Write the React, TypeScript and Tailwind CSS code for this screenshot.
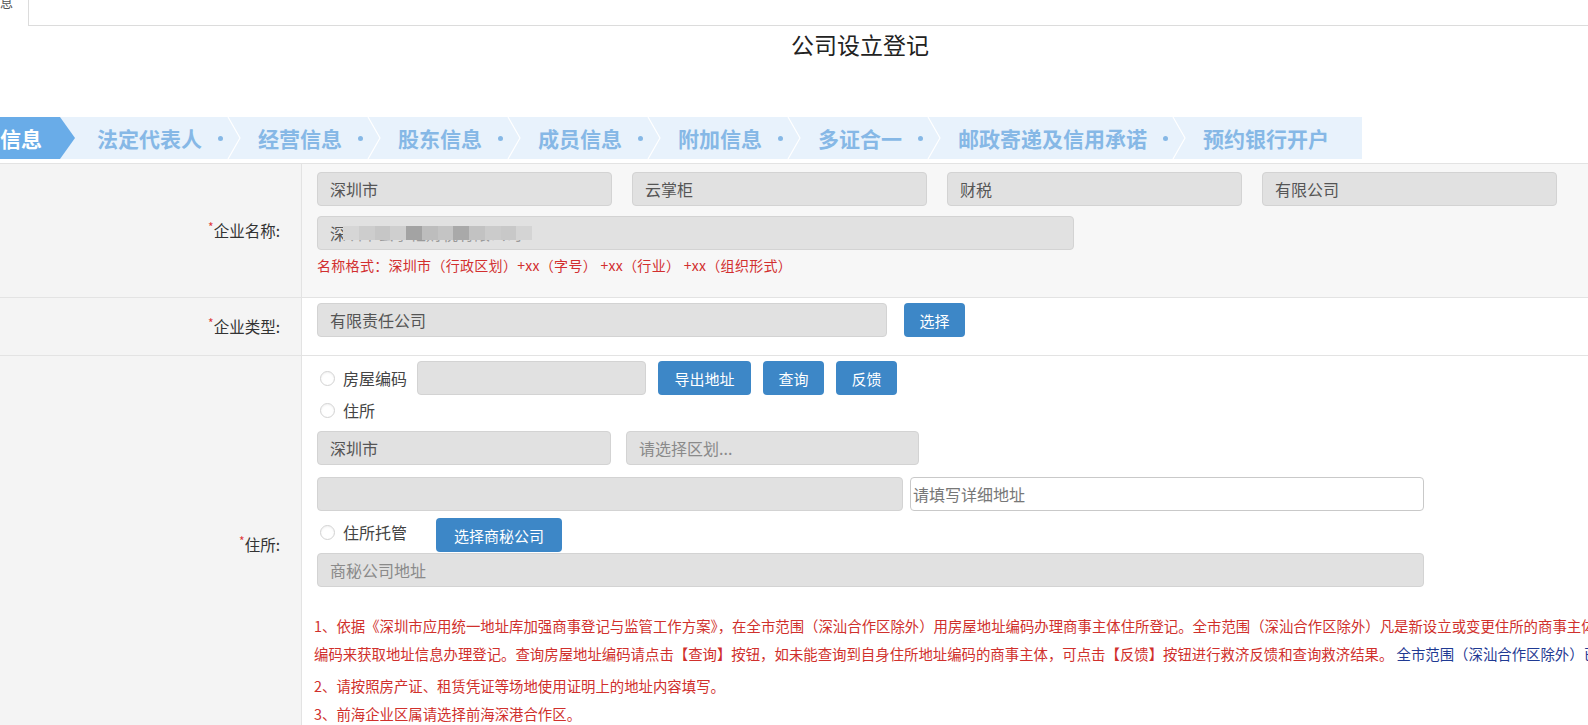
import React from 'react';

const steps = ['法定代表人', '经营信息', '股东信息', '成员信息', '附加信息', '多证合一', '邮政寄递及信用承诺'];

const mosaic = ['#d6d6d6', '#cdcdcd', '#c6c6c6', '#cfcfcf', '#a3a3a3', '#bdbdbd', '#c4c4c4', '#a9a9a9', '#c2c2c2', '#cbcbcb', '#c8c8c8', '#d4d4d4'];

function Field({
  text,
  w,
  muted = false,
  white = false,
  children,
}: {
  text?: string;
  w: string;
  muted?: boolean;
  white?: boolean;
  children?: React.ReactNode;
}) {
  return (
    <div
      className={`${w} h-[34px] shrink-0 rounded-[4px] border flex items-center text-[16px] leading-none whitespace-nowrap overflow-hidden ${
        white ? 'bg-white border-[#c9c9c9] pl-[2px] text-[#777]' : 'bg-[#e1e1e1] border-[#d3d3d3] pl-[12px]'
      } ${muted ? 'text-[#8a8a8a]' : white ? '' : 'text-[#555]'}`}
    >
      {children ?? text}
    </div>
  );
}

function Btn({ label, w }: { label: string; w: string }) {
  return (
    <button
      className={`${w} h-[34px] shrink-0 rounded-[4px] bg-[#3d87c7] text-white text-[15px] leading-none flex items-center justify-center`}
    >
      {label}
    </button>
  );
}

function Radio({ label }: { label: string }) {
  return (
    <div className="flex items-center shrink-0">
      <span className="w-[15px] h-[15px] rounded-full border border-[#d2d2d2] bg-white shadow-[inset_0_1px_2px_rgba(0,0,0,0.06)] ml-[3px]" />
      <span className="ml-[8px] text-[16px] text-[#444]">{label}</span>
    </div>
  );
}

function Label({ text }: { text: string }) {
  return (
    <div className="w-[302px] shrink-0 bg-[#f4f4f4] border-r border-[#e3e3e3] flex items-center justify-end pr-[21px] text-[15.5px] text-[#333]">
      <span className="whitespace-nowrap">
        <span className="text-[#e03b3b] text-[12px] align-top relative -top-[1px]">*</span>
        {text}
      </span>
    </div>
  );
}

export default function App() {
  return (
    <div className="w-[1588px] h-[725px] overflow-hidden bg-white font-['Noto_Sans_CJK_SC','Microsoft_YaHei',sans-serif] text-[#333]">
      {/* top strip */}
      <div className="flex h-[26px]">
        <div className="w-[28px] overflow-hidden">
          <span className="block text-[13px] leading-none text-[#555] mt-[-5px]">息</span>
        </div>
        <div className="flex-1 border-l border-b border-[#dcdcdc] bg-white" />
      </div>

      {/* title */}
      <div className="mt-[3px] h-[30px] flex items-center justify-center">
        <span className="text-[23px] leading-none text-[#222] ml-[132px]">公司设立登记</span>
      </div>

      {/* step bar */}
      <div className="mt-[58px] h-[42px] w-[1362px] flex items-center bg-[#e8f2fc] font-bold text-[21px] leading-none text-[#86b8e6]">
        <div className="h-full w-[60px] bg-[#69ace8] flex items-center text-white">信息</div>
        <svg width="15" height="42" viewBox="0 0 15 42" className="shrink-0">
          <polygon points="0,0 15,21 0,42" fill="#69ace8" />
        </svg>
        <div className="flex items-center ml-[22px]">
          {steps.map((s) => (
            <div key={s} className="flex items-center h-[42px]">
              <span>{s}</span>
              <span className="ml-[16px] w-[5px] h-[5px] rounded-full bg-[#86b8e6]" />
              <svg width="20" height="42" viewBox="0 0 20 42" className="ml-[2px] shrink-0">
                <polyline points="3,0 15,21 3,42" fill="none" stroke="#ffffff" strokeWidth="1.2" />
              </svg>
              <span className="w-[13px]" />
            </div>
          ))}
          <span>预约银行开户</span>
        </div>
      </div>

      {/* form table */}
      <div className="mt-[4px] border-t border-[#e3e3e3]">
        {/* 企业名称 */}
        <div className="flex h-[134px] border-b border-[#e3e3e3]">
          <Label text="企业名称:" />
          <div className="flex-1 bg-[#f7f7f7] pl-[15px] pt-[8px]">
            <div className="flex gap-[20px]">
              <Field w="w-[295px]" text="深圳市" />
              <Field w="w-[295px]" text="云掌柜" />
              <Field w="w-[295px]" text="财税" />
              <Field w="w-[295px]" text="有限公司" />
            </div>
            <div className="mt-[10px]">
              <Field w="w-[757px]">
                <span>深</span>
                <span className="relative text-[#9a9a9a]">
                  圳市云掌柜财税有限公司
                  <span className="absolute left-[-3px] right-[-10px] top-[1px] h-[14px] flex">
                    {mosaic.map((c, i) => (
                      <span key={i} className="flex-1 h-full" style={{ background: c }} />
                    ))}
                  </span>
                </span>
              </Field>
            </div>
            <div className="mt-[5px] h-[20px] flex items-center text-[14px] tracking-[0.3px] text-[#d22f2f] whitespace-nowrap">
              名称格式：深圳市（行政区划）+xx（字号） +xx（行业） +xx（组织形式）
            </div>
          </div>
        </div>

        {/* 企业类型 */}
        <div className="flex h-[58px] border-b border-[#e3e3e3]">
          <Label text="企业类型:" />
          <div className="flex-1 bg-white pl-[15px] pt-[5px]">
            <div className="flex items-center">
              <Field w="w-[570px]" text="有限责任公司" />
              <div className="ml-[17px]">
                <Btn label="选择" w="w-[61px]" />
              </div>
            </div>
          </div>
        </div>

        {/* 住所 */}
        <div className="flex">
          <Label text="住所:" />
          <div className="flex-1 bg-white pl-[15px] pt-[5px] pb-[6px]">
            <div className="flex items-center">
              <Radio label="房屋编码" />
              <div className="ml-[10px]">
                <Field w="w-[229px]" />
              </div>
              <div className="ml-[12px] flex gap-[12px]">
                <Btn label="导出地址" w="w-[93px]" />
                <Btn label="查询" w="w-[61px]" />
                <Btn label="反馈" w="w-[61px]" />
              </div>
            </div>
            <div className="mt-[2px] h-[26px] flex items-center">
              <Radio label="住所" />
            </div>
            <div className="mt-[8px] flex gap-[15px]">
              <Field w="w-[294px]" text="深圳市" />
              <Field w="w-[293px]" text="请选择区划..." muted />
            </div>
            <div className="mt-[12px] flex gap-[7px]">
              <Field w="w-[586px]" />
              <Field w="w-[514px]" text="请填写详细地址" white />
            </div>
            <div className="mt-[7px] flex items-center">
              <div className="-mt-[6px]">
                <Radio label="住所托管" />
              </div>
              <div className="ml-[29px]">
                <Btn label="选择商秘公司" w="w-[126px]" />
              </div>
            </div>
            <div className="mt-[1px]">
              <Field w="w-[1107px]" text="商秘公司地址" muted />
            </div>
            <div className="mt-[25px] -ml-[3px] text-[14.4px] leading-[28px] text-[#d0302c] whitespace-nowrap">
              <p>
                1、依据《深圳市应用统一地址库加强商事登记与监管工作方案》，在全市范围（深汕合作区除外）用房屋地址编码办理商事主体住所登记。全市范围（深汕合作区除外）凡是新设立或变更住所的商事主体须使用房屋
              </p>
              <p>
                编码来获取地址信息办理登记。查询房屋地址编码请点击【查询】按钮，如未能查询到自身住所地址编码的商事主体，可点击【反馈】按钮进行救济反馈和查询救济结果。{' '}
                <span className="text-[#1f3a93]">全市范围（深汕合作区除外）已办理住所登记的商事主体</span>
              </p>
              <p className="mt-[4px]">2、请按照房产证、租赁凭证等场地使用证明上的地址内容填写。</p>
              <p>3、前海企业区属请选择前海深港合作区。</p>
            </div>
          </div>
        </div>
      </div>
    </div>
  );
}
